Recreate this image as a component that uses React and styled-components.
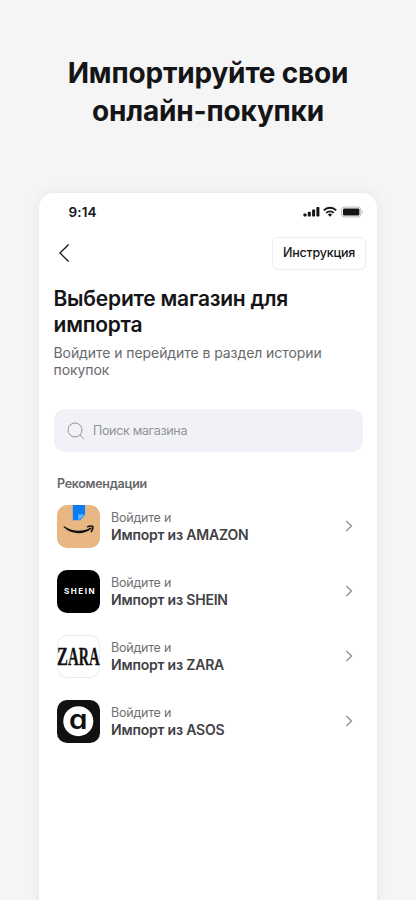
import React from "react";
import styled, { createGlobalStyle, css } from "styled-components";

const GlobalStyle = createGlobalStyle`
  * {
    box-sizing: border-box;
  }
  body {
    margin: 0;
    background: #f5f5f5;
    font-family: Inter, "Liberation Sans", sans-serif;
    color: #151517;
  }
`;

const Page = styled.div`
  height: 900px;
  padding-top: 54px;
  display: flex;
  flex-direction: column;
  align-items: center;
  overflow: hidden;
`;

const PromoTitle = styled.h1`
  margin: 0;
  font-size: 28px;
  line-height: 38px;
  font-weight: 700;
  letter-spacing: -0.17px;
  text-align: center;
`;

const Phone = styled.main`
  width: 338px;
  flex: 1 0 auto;
  margin: 63px 0 -30px;
  border-radius: 15px 15px 0 0;
  background: #fff;
  box-shadow: 0 0 14px rgba(0, 0, 0, 0.07);
`;

const StatusBar = styled.div`
  height: 38px;
  padding: 0 14px 0 29.5px;
  display: flex;
  align-items: center;
  justify-content: space-between;
`;

const Time = styled.span`
  font-size: 13.5px;
  line-height: 16px;
  font-weight: 600;
  letter-spacing: 0.15px;
`;

const StatusIcons = styled.svg`
  width: 60px;
  height: 12px;
`;

const NavBar = styled.div`
  height: 44px;
  padding: 0 11px 0 19px;
  display: flex;
  align-items: center;
  justify-content: space-between;
`;

const BackButton = styled.button`
  width: 12px;
  height: 20px;
  padding: 0;
  border: 0;
  background: none;
  color: #151517;

  svg {
    display: block;
  }
`;

const GuideButton = styled.button`
  width: 94px;
  height: 33px;
  padding: 0;
  border: 1px solid #ededef;
  border-radius: 6px;
  background: #fff;
  color: #151517;
  font: 500 12.5px/16px Inter, "Liberation Sans", sans-serif;
  letter-spacing: -0.2px;
`;

const Intro = styled.section`
  padding: 10.5px 14.5px 0;
`;

const Heading = styled.h2`
  margin: 0;
  font-size: 21px;
  line-height: 26px;
  font-weight: 600;
  letter-spacing: -0.22px;
`;

const Subtitle = styled.p`
  margin: 6px 0 0;
  font-size: 14px;
  line-height: 17.4px;
  letter-spacing: -0.07px;
  color: #69696d;
`;

const SearchField = styled.label`
  height: 43.5px;
  margin: 30.5px 14.5px 0;
  padding-left: 13px;
  display: flex;
  align-items: center;
  gap: 8.5px;
  border-radius: 11px;
  background: #f1f2f8;
  color: #929296;
  font-size: 12.5px;
  letter-spacing: -0.33px;
`;

const SectionTitle = styled.h3`
  margin: 23.5px 18px 0;
  font-size: 12.5px;
  line-height: 16px;
  font-weight: 600;
  letter-spacing: -0.3px;
  color: #67676c;
`;

const StoreList = styled.ul`
  list-style: none;
  margin: 12.8px 0 0;
  padding: 0 24px 0 18px;
  display: grid;
  gap: 21.8px;
`;

const StoreRow = styled.li`
  height: 43.2px;
  display: flex;
  align-items: center;
  color: #8a8a8e;
`;

const StoreIcon = styled.span`
  width: 43px;
  height: 43px;
  flex: none;
  overflow: hidden;
  border-radius: 10px;
  background: ${props => props.$color};
  ${props =>
    props.$outlined &&
    css`
      box-shadow: inset 0 0 0 1px #ececec;
    `};

  svg {
    display: block;
  }
`;

const StoreText = styled.div`
  flex: 1;
  padding: 1px 0 0 11px;
  font-size: 12.5px;
  line-height: 16px;
  letter-spacing: -0.22px;
  color: #6f6f73;
`;

const StoreName = styled.div`
  font-size: 14px;
  line-height: 18px;
  font-weight: 600;
  letter-spacing: -0.2px;
  color: #414145;
`;

const AmazonLogo = () => (
  <svg width="43" height="43" viewBox="0 0 43 43">
    <path d="M15.800 0h12.200v10l-5 5.200h-7.200z" fill="#0a7cf5" />
    <path d="M21.300 9.400h6.700l-6.700 5.800z" fill="#68baff" />
    <path
      d="M7.300 21.200c8.400 5.800 18.500 6 26.300 1.400c1-.6 1.700.4.800 1.200c-7.400 6.400-20 6-27.500-1.500c-.6-.6-.3-1.400.4-1.100z"
      fill="#111"
    />
    <path
      d="M30.600 21.800c1.700-1.200 4.700-.9 5.200-.4c.4.600.1 3.300-1.500 5.200"
      fill="none"
      stroke="#111"
      strokeWidth="1.500"
      strokeLinecap="round"
    />
  </svg>
);

const SheinLogo = () => (
  <svg width="43" height="43" viewBox="0 0 43 43">
    <text
      x="7"
      y="24.200"
      fill="#fff"
      fontFamily="Inter, sans-serif"
      fontSize="8"
      fontWeight="700"
      textLength="30.500"
    >
      SHEIN
    </text>
  </svg>
);

const ZaraLogo = () => (
  <svg width="43" height="43" viewBox="0 0 43 43">
    <g
      fill="#111"
      stroke="#111"
      strokeWidth="0.350"
      fontFamily="Liberation Serif, serif"
      fontWeight="700"
      fontSize="26"
    >
      <text transform="translate(0 30) scale(0.63 1)">Z</text>
      <text transform="translate(11 30) scale(0.57 1)">A</text>
      <text transform="translate(21.800 30) scale(0.54 1)">R</text>
      <text transform="translate(32 30) scale(0.57 1)">A</text>
    </g>
  </svg>
);

const AsosLogo = () => (
  <svg width="43" height="43" viewBox="0 0 43 43">
    <circle cx="21.300" cy="21.200" r="15" fill="#fff" />
    <text
      transform="translate(21.300 28.800) scale(1.120 1)"
      textAnchor="middle"
      fill="#111"
      fontFamily="Inter, sans-serif"
      fontSize="26.500"
      fontWeight="600"
      style={{ fontFeatureSettings: '"cv11"' }}
    >
      a
    </text>
  </svg>
);

const ChevronIcon = () => (
  <svg width="8" height="12" viewBox="0 0 8 12" fill="none">
    <path d="M1.200.9l5.300 5.100-5.300 5.100" stroke="currentColor" strokeWidth="1.300" />
  </svg>
);

const SearchIcon = () => (
  <svg width="18" height="18" viewBox="0 0 18 18" fill="none">
    <circle cx="8" cy="8" r="7" stroke="currentColor" />
    <path d="M13 13l3.700 3.700" stroke="currentColor" />
  </svg>
);

const stores = [
  { name: "AMAZON", color: "#e8b783", Logo: AmazonLogo },
  { name: "SHEIN", color: "#000", Logo: SheinLogo },
  { name: "ZARA", color: "#fff", outlined: true, Logo: ZaraLogo },
  { name: "ASOS", color: "#111", Logo: AsosLogo }
];

const App = () => (
  <Page>
    <GlobalStyle />
    <PromoTitle>
      Импортируйте свои
      <br />
      онлайн-покупки
    </PromoTitle>
    <Phone>
      <StatusBar>
        <Time>9:14</Time>
        <StatusIcons viewBox="0 0 60 12">
          <g fill="#151517">
            <rect x="0.500" y="7.500" width="3" height="3" rx="0.700" />
            <rect x="4.800" y="5.700" width="3" height="4.800" rx="0.700" />
            <rect x="9.100" y="3.500" width="3" height="7" rx="0.700" />
            <rect x="13.400" y="1" width="3" height="9.500" rx="0.700" />
            <path d="M27 10.800l2.200-2.300a3.200 3.200 0 0 0-4.400 0z" />
          </g>
          <g fill="none" stroke="#151517" strokeWidth="1.800">
            <path d="M20.800 4.400a8.600 8.600 0 0 1 12.400 0" />
            <path d="M23.200 7a5.200 5.200 0 0 1 7.600 0" />
          </g>
          <rect x="38.600" y="1.100" width="19.200" height="9.800" rx="2.600" fill="#fff" stroke="#b8b8b8" />
          <rect x="40" y="2.600" width="16.400" height="6.800" rx="1.200" fill="#151517" />
          <path d="M59.200 4.500v3" stroke="#b8b8b8" />
        </StatusIcons>
      </StatusBar>
      <NavBar>
        <BackButton aria-label="Назад">
          <svg width="12" height="20" viewBox="0 0 12 20" fill="none">
            <path d="M10.600 1.500L2 10l8.600 8.500" stroke="currentColor" strokeWidth="1.300" />
          </svg>
        </BackButton>
        <GuideButton>Инструкция</GuideButton>
      </NavBar>
      <Intro>
        <Heading>
          Выберите магазин для
          <br />
          импорта
        </Heading>
        <Subtitle>
          Войдите и перейдите в раздел истории
          <br />
          покупок
        </Subtitle>
      </Intro>
      <SearchField>
        <SearchIcon />
        Поиск магазина
      </SearchField>
      <SectionTitle>Рекомендации</SectionTitle>
      <StoreList>
        {stores.map(({ name, color, outlined, Logo }) => (
          <StoreRow key={name}>
            <StoreIcon $color={color} $outlined={outlined}>
              <Logo />
            </StoreIcon>
            <StoreText>
              Войдите и<StoreName>Импорт из {name}</StoreName>
            </StoreText>
            <ChevronIcon />
          </StoreRow>
        ))}
      </StoreList>
    </Phone>
  </Page>
);

export default App;
